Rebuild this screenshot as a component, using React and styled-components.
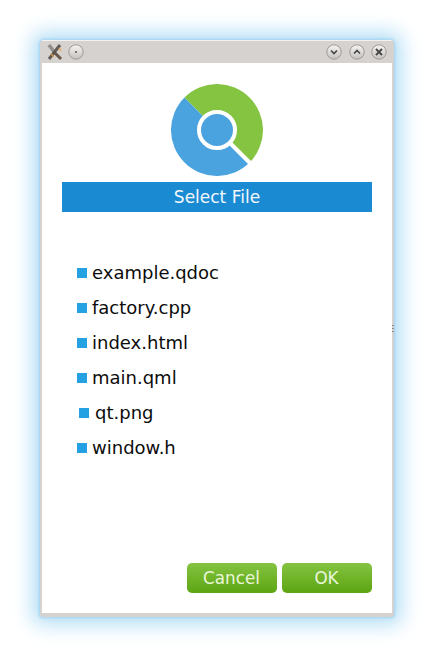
import styled, { createGlobalStyle } from 'styled-components'

const GlobalStyle = createGlobalStyle`
    html, body{
        margin: 0;
        height: 100%;
        background: #fff;
        overflow: hidden;
    }
    *{
        box-sizing: border-box;
    }
`

const Desktop = styled.div`
    height: 657px;
    padding: 40px;
    font-family: 'DejaVu Sans', sans-serif;
`

const Win = styled.section`
    position: relative;
    width: 354px;
    height: 577px;
    display: flex;
    flex-direction: column;
    background: #fff;
    border-style: solid;
    border-color: #d6d2cf;
    border-width: 1px 2px 4px 2px;
    border-top-color: #f4f2f1;
    border-radius: 4px 4px 3px 3px;
    box-shadow: 0 0 3px 1px #9fd3f2, 0 0 20px 8px #b6dff6;
`

const TitleBar = styled.header`
    height: 22px;
    flex: none;
    display: flex;
    align-items: center;
    padding: 0 5px 0 4px;
    background: #d6d2cf;
    .spacer{
        flex: 1;
    }
`

const AppIcon = styled.svg`
    width: 18px;
    height: 18px;
    margin-right: 4px;
`

const RoundBtn = styled.svg`
    width: 16px;
    height: 16px;
    margin-left: ${p => p.$gap || 0}px;
`

const Body = styled.main`
    flex: 1;
    display: flex;
    flex-direction: column;
    padding: 21px 20px 20px;
`

const Logo = styled.svg`
    display: block;
    width: 92px;
    height: 92px;
    margin: 0 auto 6px;
    flex: none;
`

const Heading = styled.h1`
    margin: 0;
    height: 30px;
    line-height: 30px;
    background: #1a8bd3;
    color: #f2f8fc;
    font-size: 17px;
    font-weight: 400;
    text-align: center;
`

const FileList = styled.ul`
    list-style: none;
    margin: 43px 0 0;
    padding: 0;
`

const FileRow = styled.li`
    height: 35px;
    display: flex;
    align-items: center;
    padding-left: ${p => p.$indent || 15}px;
    color: #0c0c0c;
    font-size: 18px;
    &::before{
        content: '';
        width: 10px;
        height: 10px;
        margin-right: ${p => p.$gap || 5}px;
        background: #23a1e3;
    }
`

const Footer = styled.footer`
    margin-top: auto;
    display: flex;
    justify-content: flex-end;
    gap: 5px;
`

const ActionButton = styled.button`
    width: 90px;
    height: 30px;
    padding: 0 1px 0 0;
    border: none;
    border-radius: 5px;
    background: linear-gradient(#84c341, #5da512);
    color: #eaf6da;
    font-family: inherit;
    font-size: 16.8px;
`

const Grip = styled.div`
    position: absolute;
    right: -2px;
    top: 284px;
    width: 2px;
    height: 9px;
    background: repeating-linear-gradient(#8b8b8b 0 1px, #d6d2cf 1px 3px);
`

const files = [
    { name: 'example.qdoc' },
    { name: 'factory.cpp' },
    { name: 'index.html' },
    { name: 'main.qml' },
    { name: 'qt.png', indent: 17, gap: 6 },
    { name: 'window.h' },
]

function WindowButton({ gap, children }){
    return (
        <RoundBtn $gap={gap} viewBox='0 0 16 16'>
            <defs>
                <linearGradient id='rb' x1='0' y1='0' x2='0' y2='1'>
                    <stop offset='0' stopColor='#f6f5f4' />
                    <stop offset='1' stopColor='#c4c0bd' />
                </linearGradient>
            </defs>
            <circle cx='8' cy='8' r='7.2' fill='url(#rb)' stroke='#9d9a98' strokeWidth='1' />
            {children}
        </RoundBtn>
    )
}

export default function App(){
    return (
        <>
        <GlobalStyle />
        <Desktop>
            <Win>
                <TitleBar>
                    <AppIcon viewBox='0 0 18 18'>
                        <path d='M3 2 L9 10' stroke='#8a8684' strokeWidth='3.4' opacity='.9' />
                        <path d='M8 9 L15 16' stroke='#5a4a3a' strokeWidth='3' opacity='.9' />
                        <path d='M14 2 L3 16' stroke='#57504a' strokeWidth='3' opacity='.9' />
                        <path d='M5 11 L8 14 M13 5 L15 8' stroke='#e6a24a' strokeWidth='1.4' opacity='.85' />
                    </AppIcon>
                    <WindowButton>
                        <circle cx='8' cy='8' r='1' fill='#555' />
                    </WindowButton>
                    <span className='spacer' />
                    <WindowButton>
                        <path d='M5 6.5 L8 9.5 L11 6.5' fill='none' stroke='#444' strokeWidth='1.6' />
                    </WindowButton>
                    <WindowButton gap={6.5}>
                        <path d='M5 9.5 L8 6.5 L11 9.5' fill='none' stroke='#444' strokeWidth='1.6' />
                    </WindowButton>
                    <WindowButton gap={6.5}>
                        <path d='M5 5 L11 11 M11 5 L5 11' fill='none' stroke='#444' strokeWidth='1.8' />
                    </WindowButton>
                </TitleBar>
                <Body>
                    <Logo viewBox='0 0 92 92'>
                        <path d='M13.47 13.47 A46 46 0 0 0 78.53 78.53 Z' fill='#4aa3df' />
                        <path d='M13.47 13.47 A46 46 0 0 1 78.53 78.53 Z' fill='#84c441' />
                        <circle cx='46' cy='46' r='18' fill='#4aa3df' stroke='#fff' strokeWidth='4' />
                        <path d='M59 59 L80 80' stroke='#fff' strokeWidth='4' />
                    </Logo>
                    <Heading>Select File</Heading>
                    <FileList>
                        {files.map(f => (
                            <FileRow key={f.name} $indent={f.indent} $gap={f.gap}>{f.name}</FileRow>
                        ))}
                    </FileList>
                    <Footer>
                        <ActionButton>Cancel</ActionButton>
                        <ActionButton>OK</ActionButton>
                    </Footer>
                </Body>
                <Grip />
            </Win>
        </Desktop>
        </>
    )
}
